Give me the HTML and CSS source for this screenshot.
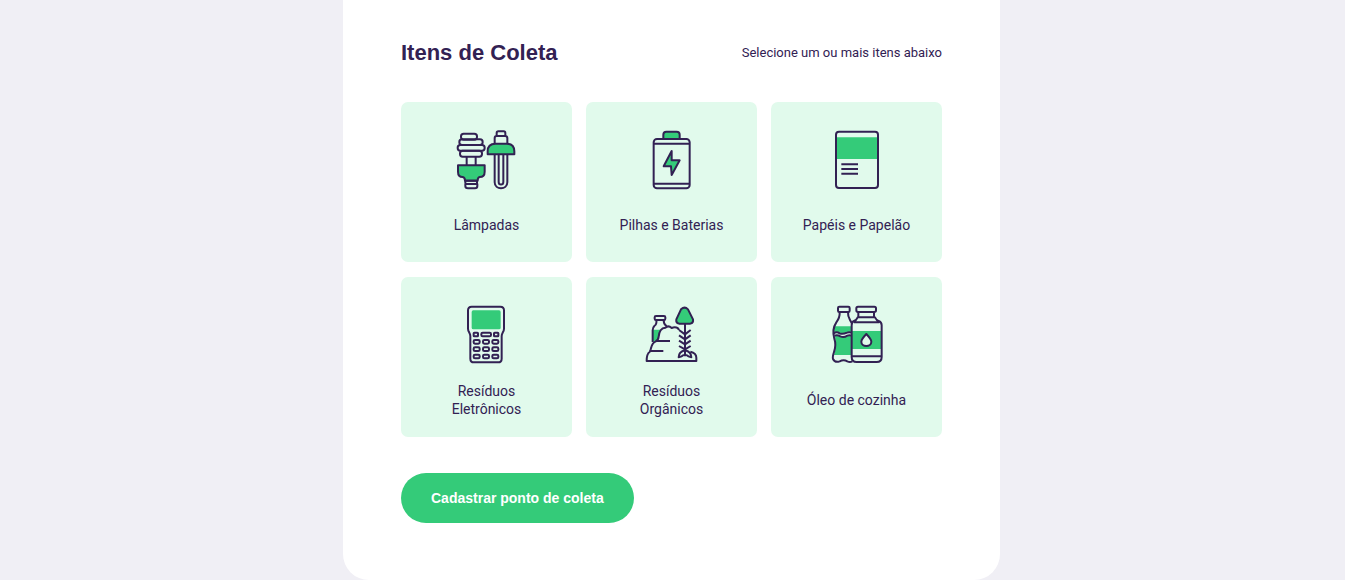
FILE: index.html
```html
<!DOCTYPE html>
<html lang="pt-BR">
<head>
<meta charset="utf-8">
<meta name="viewport" content="width=device-width, initial-scale=1">
<title>Itens de Coleta</title>
<link rel="stylesheet" href="styles.css">
</head>
<body>
<form class="panel">
  <div class="legend">
    <h2 class="title">Itens de Coleta</h2>
    <span class="hint">Selecione um ou mais itens abaixo</span>
  </div>
  <div class="items">
    <button class="item" type="button" aria-pressed="false">
      <svg class="icon" viewBox="0 0 219 216" aria-hidden="true">
        <rect x="33" y="29" width="48" height="18" rx="8"/>
        <rect x="28" y="46" width="70" height="17" rx="8"/>
        <rect x="23" y="63" width="81" height="17" rx="8"/>
        <rect x="30" y="80" width="66" height="18" rx="8"/>
        <path d="M50 98V124M77 98V124M46 168V178M81 168V178M46 180H82V186Q82 193 75 193H54Q46 193 46 186Z"/>
        <path class="fill" d="M24 124H104V143Q104 159 89 159Q83 160 83 170H45Q45 160 38 159Q24 159 24 143Z"/>
        <path d="M45 170H83"/>
        <path d="M140 36V27Q140 22 145 22H161Q166 22 166 27V36M134 58V42Q134 36 140 36H165Q172 36 172 42V58"/>
        <path class="fill" d="M113 91V82Q113 59 136 59H170Q193 59 193 82V91Z"/>
        <path d="M134 92V175C134 199 172 199 172 175V92M146 92V174C146 184 160 184 160 174V92"/>
      </svg>
      <span class="label">Lâmpadas</span>
    </button>
    <button class="item" type="button" aria-pressed="false">
      <svg class="icon" viewBox="-3 0 219 216" aria-hidden="true">
        <path class="fill" d="M82 45V32Q82 23 91 23H122Q131 23 131 32V45Z"/>
        <rect x="53" y="45" width="108" height="148" rx="10"/>
        <path d="M53 59H161M53 179H161"/>
        <path class="fill" d="M107 81L83 127H105L107 153L131 109H107Z"/>
      </svg>
      <span class="label">Pilhas e Baterias</span>
    </button>
    <button class="item" type="button" aria-pressed="false">
      <svg class="icon" viewBox="-3 0 219 216" aria-hidden="true">
        <path class="tint" d="M45 40H171V105H45Z"/>
        <rect x="45" y="23" width="126" height="169" rx="9"/>
        <path d="M61 121H111M61 135H111M61 149H111"/>
      </svg>
      <span class="label">Papéis e Papelão</span>
    </button>
    <button class="item" type="button" aria-pressed="false">
      <svg class="icon" viewBox="0 0 219 216" aria-hidden="true">
        <path d="M65 23H151Q162 23 162 34V89Q162 95 158 101Q155 106 155 112V179Q155 190 144 190H72Q61 190 61 179V112Q61 106 58 101Q54 95 54 89V34Q54 23 65 23Z"/>
        <rect class="tint" x="65" y="34" width="87" height="57" rx="5"/>
        <rect x="71" y="101" width="13" height="11" rx="2"/>
        <rect x="94" y="101" width="29" height="11" rx="4"/>
        <rect x="132" y="101" width="13" height="11" rx="2"/>
        <g id="keys">
          <rect x="71" y="123" width="18" height="11" rx="4"/>
          <rect x="99" y="123" width="18" height="11" rx="4"/>
          <rect x="127" y="123" width="18" height="11" rx="4"/>
        </g>
        <use href="#keys" y="22"/>
        <use href="#keys" y="44"/>
      </svg>
      <span class="label">Resíduos<br>Eletrônicos</span>
    </button>
    <button class="item" type="button" aria-pressed="false">
      <svg class="icon" viewBox="-3 0 219 216" aria-hidden="true">
        <path class="tint" d="M51 92H76C68 102 67 116 63 124L51 129Z"/>
        <rect x="56" y="51" width="32" height="12" rx="4"/>
        <path d="M61 63Q63 76 55 81Q50 86 50 94V129M83 63Q83 75 90 80L93 84"/>
        <path d="M128 93C128 85 116 83 107 87C98 79 91 84 89 86C76 85 69 99 68 113Q67 124 58 128C48 132 47 140 44 151L41 159C34 163 32 174 32 186H181V176Q181 162 163 158M62 126H102M43 156H82"/>
        <path class="fill" d="M135 31Q146 21 156 31L171 61Q173 71 163 74H129Q119 71 121 61Z"/>
        <path d="M147 74V172M129 93L147 106L164 93M129 109L147 121L164 109M129 125L147 136L164 125M129 141L147 151L164 141"/>
        <path d="M146 154Q128 159 128 175Q137 173 144 167M148 154Q166 159 166 175Q157 173 150 167"/>
      </svg>
      <span class="label">Resíduos<br>Orgânicos</span>
    </button>
    <button class="item" type="button" aria-pressed="false">
      <svg class="icon" viewBox="-3 0 219 216" aria-hidden="true">
        <path class="tint" d="M40 82H92V102Q83 98 76 101Q63 106 56 101Q47 97 39 102ZM42 109Q51 108 57 112Q66 117 78 110Q84 107 92 110V168H39L45 145Z"/>
        <path class="tint" d="M92 96H181V150H92Z"/>
        <rect x="51" y="23" width="35" height="16" rx="4"/>
        <path d="M56 39Q57 56 46 70C34 88 36 105 40 119C45 134 44 145 39 159Q34 174 36 180Q42 192 56 187Q68 180 79 187Q87 191 94 187M81 39Q80 50 87 63L92 72"/>
        <path d="M38 103Q47 97 56 103Q65 107 78 101Q84 98 92 101M40 110Q49 106 58 112Q68 117 79 110Q85 107 92 110"/>
        <rect x="106" y="23" width="59" height="16" rx="5"/>
        <path d="M112 39V55M159 39V55M110 55H162Q167 65 173 66Q182 69 182 79V174Q182 189 167 189H107Q92 189 92 174V79Q92 69 99 66Q106 64 110 55ZM99 70H175M92 172H182"/>
        <path class="drop" d="M136 105Q151 121 151 128C151 145 121 145 121 128Q121 121 136 105Z"/>
      </svg>
      <span class="label">Óleo de cozinha</span>
    </button>
  </div>
  <button class="submit" type="submit">Cadastrar ponto de coleta</button>
</form>
</body>
</html>
```
FILE: styles.css
```css
* {
  box-sizing: border-box;
  margin: 0;
}

body {
  padding-right: 2px;
  background: #f0eff5;
  color: #322153;
  font-family: Roboto, "Liberation Sans", sans-serif;
}

.panel {
  max-width: 657px;
  margin: 0 auto;
  padding: 38px 58px 57px;
  background: #fff;
  border-radius: 0 0 26px 26px;
}

.legend {
  display: flex;
  justify-content: space-between;
  align-items: center;
  margin-bottom: 34px;
}

.title {
  font: bold 22px/30px "Liberation Sans", Arial, sans-serif;
}

.hint {
  font-size: 13px;
  line-height: 30px;
}

.items {
  display: grid;
  grid-template-columns: repeat(3, 1fr);
  gap: 15px 14px;
}

.item {
  display: flex;
  flex-direction: column;
  align-items: center;
  min-height: 160px;
  padding: 22px 16px 8px;
  border: 0;
  border-radius: 7px;
  background: #e1faec;
  color: inherit;
  font: 14px/18px Roboto, "Liberation Sans", sans-serif;
  cursor: pointer;
}

.icon {
  width: 73px;
  height: 72px;
  fill: none;
  stroke: #322153;
  stroke-width: 6;
  stroke-linejoin: round;
}

.fill {
  fill: #34cb79;
}

.tint {
  fill: #34cb79;
  stroke: none;
}

.drop {
  fill: #e1faec;
}

.label {
  display: flex;
  flex: 1;
  align-items: center;
}

.submit {
  display: block;
  height: 50px;
  margin-top: 36px;
  padding: 0 30px;
  border: 0;
  border-radius: 25px;
  background: #34cb79;
  color: #fff;
  font: bold 14px/18px "Liberation Sans", Arial, sans-serif;
  cursor: pointer;
}
```
